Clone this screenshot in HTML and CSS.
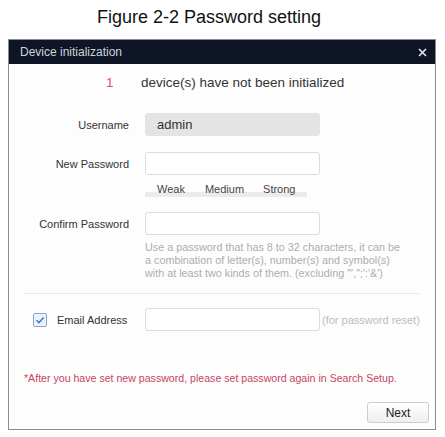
FILE: index.html
```html
<!DOCTYPE html>
<html>
<head>
<meta charset="utf-8">
<link rel="stylesheet" href="styles.css">
</head>
<body>
<div class="caption">Figure 2-2 Password setting</div>
<div class="dialog">
  <div class="header">
    <span class="header-title">Device initialization</span>
    <svg class="close" width="9" height="9" viewBox="0 0 9 9"><path d="M1 1L8 8M8 1L1 8" stroke="#e6e8ee" stroke-width="1.6"/></svg>
  </div>
  <div class="content">
    <div class="count-row"><span class="count">1</span><span class="count-text">device(s) have not been initialized</span></div>
    <div class="row row-user">
      <div class="label">Username</div>
      <div class="input input-disabled">admin</div>
    </div>
    <div class="row row-new">
      <div class="label">New Password</div>
      <div class="input"></div>
    </div>
    <div class="strength">
      <div class="strength-bar"></div>
      <span class="s-weak">Weak</span><span class="s-medium">Medium</span><span class="s-strong">Strong</span>
    </div>
    <div class="row row-confirm">
      <div class="label">Confirm Password</div>
      <div class="input"></div>
    </div>
    <div class="hint">Use a password that has 8 to 32 characters, it can be<br>a combination of letter(s), number(s) and symbol(s)<br>with at least two kinds of them. (excluding "',";':'&amp;')</div>
    <div class="separator"></div>
    <div class="row row-email">
      <div class="label label-check">
        <span class="checkbox"><svg width="12" height="12" viewBox="0 0 12 12"><path d="M2.5 6.2L5 8.6L9.6 3.6" fill="none" stroke="#3f7fc0" stroke-width="1.5"/></svg></span>
        <span>Email Address</span>
      </div>
      <div class="input"></div>
      <span class="reset-note">(for password reset)</span>
    </div>
    <div class="warning">*After you have set new password, please set password again in Search Setup.</div>
    <div class="actions"><button class="btn">Next</button></div>
  </div>
</div>
</body>
</html>
```
FILE: styles.css
```css
html, body {
  margin: 0;
  padding: 0;
  background: #ffffff;
  font-family: "Liberation Sans", Arial, sans-serif;
}
.caption {
  height: 39px;
  line-height: 30px;
  font-size: 18px;
  color: #111;
  padding-left: 97px;
  box-sizing: border-box;
  padding-top: 2px;
}
.dialog {
  margin-left: 8px;
  width: 428px;
  box-sizing: border-box;
  border: 1px solid #8c8c8c;
  background: #fdfdfd;
}
.header {
  height: 24px;
  background: #0d1526;
  display: flex;
  align-items: center;
  justify-content: space-between;
  padding: 0 8px 0 11px;
}
.header-title {
  font-size: 12px;
  color: #cfd3da;
}
.close {
  display: block;
}
.content {
  padding: 8px 6px 6px 0;
  font-size: 11px;
  color: #333;
}
.count-row {
  height: 20px;
  display: flex;
  align-items: center;
  font-size: 13.5px;
  color: #333;
}
.count {
  color: #e0506e;
  margin-left: 97px;
  width: 35px;
}
.row {
  display: flex;
  align-items: center;
  height: 23px;
}
.label {
  width: 120px;
  margin-right: 16px;
  text-align: right;
  color: #333;
}
.input {
  width: 175px;
  height: 23px;
  box-sizing: border-box;
  border: 1px solid #dcdcdc;
  border-radius: 3px;
  background: #fff;
}
.input-disabled {
  background: #e4e4e4;
  border-color: #e4e4e4;
  font-size: 13px;
  color: #333;
  line-height: 21px;
  padding-left: 11px;
}
.row-user { margin-top: 21px; }
.row-new { margin-top: 16px; }
.strength {
  position: relative;
  margin-top: 5px;
  margin-left: 136px;
  height: 18px;
  width: 162px;
  font-size: 11px;
  color: #444;
  display: flex;
  align-items: center;
}
.strength-bar {
  position: absolute;
  left: 0;
  right: 0;
  top: 12px;
  height: 5px;
  background: #ebebeb;
}
.strength span { position: relative; }
.s-weak { margin-left: 12px; }
.s-medium { margin-left: 20px; }
.s-strong { margin-left: 19px; }
.row-confirm { margin-top: 14px; }
.hint {
  margin-top: 6px;
  margin-left: 136px;
  line-height: 13px;
  color: #adadad;
  font-size: 10.8px;
  white-space: nowrap;
}
.separator {
  margin: 13px 10px 0 15px;
  height: 1px;
  background: #e8e8e8;
}
.row-email { margin-top: 14px; }
.label-check {
  display: flex;
  align-items: center;
  text-align: left;
  padding-left: 24px;
  box-sizing: border-box;
}
.checkbox {
  width: 14px;
  height: 14px;
  box-sizing: border-box;
  border: 1px solid #88a9cf;
  border-radius: 2px;
  background: #e9f1fa;
  display: flex;
  align-items: center;
  justify-content: center;
  margin-right: 10px;
}
.checkbox svg { display: block; }
.reset-note {
  margin-left: 2px;
  color: #bcbcbc;
  white-space: nowrap;
}
.warning {
  margin-top: 40px;
  margin-left: 15px;
  line-height: 14px;
  font-size: 10.6px;
  color: #c8445e;
  white-space: nowrap;
}
.actions {
  margin-top: 17px;
  display: flex;
  justify-content: flex-end;
}
.btn {
  width: 62px;
  height: 21px;
  border: 1px solid #cdcdcd;
  border-radius: 3px;
  background: linear-gradient(#ffffff, #efefef);
  font-family: "Liberation Sans", Arial, sans-serif;
  font-size: 12px;
  color: #222;
  padding: 0;
}
```
